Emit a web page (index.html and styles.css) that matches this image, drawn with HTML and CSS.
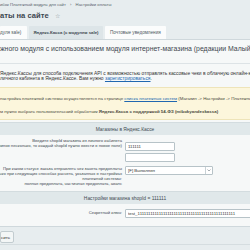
FILE: index.html
```html
<!DOCTYPE html>
<html lang="ru">

<head>
    <meta charset="UTF-8">
    <title>Настройки оплаты на сайте</title>
    <link rel="stylesheet" href="styles.css">
</head>

<body>

    <!-- шапка страницы -->
    <div class="crumbs">ибок Платежный модуль для сайт <span class="crumbs-sep">›</span> Настройки оплаты</div>
    <h1 class="page-title">аты на сайте <span class="star">☆</span></h1>

    <div class="tabs">
        <span class="tab tab-first">дуля sale)</span>
        <span class="tab tab-active">Яндекс.Касса (с модулем sale)</span>
        <span class="tab">Почтовые уведомления</span>
    </div>

    <div class="detail">
        <div class="detail-title">жного модуля с использованием модуля интернет-магазина (редакции Малый</div>

        <div class="intro">
            Яндекс.Кассы для способа подключения API с возможностью отправлять кассовые чеки в облачную онлайн-кассу<br>
            личного кабинета в Яндекс.Кассе. Вам нужно <a href="#">зарегистрироваться</a>.
        </div>

        <div class="note">
            <p>настройка платежной системы осуществляется на странице <a href="#">списка платежных систем</a> (Магазин -&gt; Настройки -&gt; Платежные</p>
            <p>м нужно выбрать пользовательский обработчик <b>Яндекс.Касса с поддержкой 54-ФЗ (mibokyandexkassa)</b></p>
        </div>

        <table class="edit-table">
            <colgroup>
                <col class="col-label">
                <col>
            </colgroup>
            <tr class="heading">
                <td colspan="2">Магазины в Яндекс.Кассе</td>
            </tr>
            <tr>
                <td class="label label-shop">Введите shopId магазина из личного кабинета<br>
                    (если магазинов несколько, то каждый shopId нужно ввести в новое поле)</td>
                <td class="field field-shop">
                    <input class="input-short" type="text" value="111111">
                    <input class="input-short" type="text" value="">
                </td>
            </tr>
            <tr>
                <td class="label label-status">При каком статусе заказа отправлять чек зачета предоплаты<br>
                    Отправлять только при следующих способах расчета, указанных в настройках<br>платежной системы:<br>полная предоплата, частичная предоплата, аванс</td>
                <td class="field field-status">
                    <div class="select-status">
                        <span>[F] Выполнен</span>
                        <span class="select-arrow">
                            <svg width="4" height="3" viewBox="0 0 4 3"><path d="M0.5 0.5 L2 2 L3.5 0.5" fill="none" stroke="#6b777e" stroke-width="0.6"/></svg>
                        </span>
                    </div>
                </td>
            </tr>
            <tr class="heading">
                <td colspan="2">Настройки магазина shopId = 111111</td>
            </tr>
            <tr>
                <td class="label label-key">Секретный ключ:</td>
                <td class="field field-key"><input class="input-long" type="text" value="test_1111111111111111111111111111111111111111111111"></td>
            </tr>
        </table>
    </div>

    <div class="buttons">
        <button class="btn">сить</button>
    </div>

</body>

</html>
```

FILE: styles.css
```css
body {
    margin: 0;
    background-color: #e7edef;
    font-family: 'Liberation Sans', Arial, sans-serif;
    color: #3f4b54;
    overflow: hidden;
}

.crumbs {
    height: 8px;
    padding-top: 2px;
    font-size: 4.2px;
    color: #58646c;
    white-space: nowrap;
}

.crumbs-sep {
    padding: 0 3px;
}

.page-title {
    margin: 0;
    height: 15px;
    padding-top: 1px;
    font-size: 7.6px;
    font-weight: bold;
    color: #3c4750;
    white-space: nowrap;
}

.star {
    padding-left: 4px;
    font-weight: normal;
    font-size: 6px;
    color: #8f9ba2;
}

.tabs {
    display: flex;
    gap: 2px;
    height: 13px;
}

.tab {
    display: flex;
    align-items: center;
    padding: 0 5px;
    background-color: #fbfcfc;
    border-radius: 1px 1px 0 0;
    font-size: 4.6px;
    color: #4c5860;
    white-space: nowrap;
}

.tab-first {
    padding-left: 0;
    width: 22px;
}

.tab-active {
    justify-content: center;
    width: 64px;
    background-color: #dde5e8;
    font-weight: bold;
    font-size: 4.3px;
    color: #3b464e;
}

.detail {
    background-color: #f6f8f8;
    border-top: 1px solid #cfd8dc;
    overflow: hidden;
}

.detail-title {
    height: 24px;
    padding-top: 5px;
    border-bottom: 1px solid #dde3e6;
    font-size: 6.9px;
    color: #3d474f;
    white-space: nowrap;
    overflow: hidden;
    box-sizing: border-box;
}

.intro {
    height: 23px;
    padding-top: 7px;
    box-sizing: border-box;
    font-size: 4.9px;
    line-height: 5px;
    color: #333;
    white-space: nowrap;
    overflow: hidden;
}

.intro a,
.note a {
    color: #2067b0;
}

.note {
    height: 33px;
    padding-top: 8px;
    box-sizing: border-box;
    background-color: #fcf6dc;
    border-top: 1px solid #eee4b9;
    border-bottom: 1px solid #eee4b9;
    font-size: 4.4px;
    color: #4a4a3c;
    white-space: nowrap;
    overflow: hidden;
}

.note p {
    margin: 0 0 8px;
}

/* таблица настроек, левый край уходит за кадр */
.edit-table {
    table-layout: fixed;
    width: calc(100% + 40px);
    margin-top: 2px;
    margin-left: -40px;
    border-collapse: collapse;
}

.col-label {
    width: 165px;
}

.edit-table td {
    padding: 0;
    vertical-align: top;
}

.heading td {
    height: 12px;
    padding-left: 40px;
    background-color: #e0e8ea;
    border-top: 1px solid #d3dcdf;
    text-align: center;
    vertical-align: middle;
    font-size: 4.9px;
    color: #3f4a52;
}

.label {
    padding-right: 3px !important;
    text-align: right;
    font-size: 4.2px;
    line-height: 5px;
    color: #3f4a52;
    white-space: nowrap;
    overflow: hidden;
}

.label-shop {
    padding-top: 3px !important;
}

.field-shop {
    padding: 7px 0 2px !important;
}

.label-status {
    padding-top: 2px !important;
    padding-bottom: 5px !important;
}

.field-status {
    padding-top: 2px !important;
}

.label-key {
    padding-top: 6px !important;
}

.field-key {
    padding: 5px 0 8px !important;
}

.edit-table input {
    display: block;
    box-sizing: border-box;
    height: 9px;
    padding: 0 2px;
    background: #fff;
    border: 1px solid #b7c3c8;
    border-radius: 1px;
    font-family: 'Liberation Sans', Arial, sans-serif;
    font-size: 4.4px;
    color: #333;
}

.input-short {
    width: 50px;
}

.input-short + .input-short {
    margin-top: 2px;
}

.input-long {
    width: 135px;
}

.select-status {
    display: flex;
    align-items: center;
    justify-content: space-between;
    box-sizing: border-box;
    width: 88px;
    height: 9px;
    padding-left: 2px;
    background: #fff;
    border: 1px solid #b7c3c8;
    border-radius: 1px;
    font-size: 4.4px;
    color: #333;
}

.select-arrow {
    display: flex;
    align-items: center;
    justify-content: center;
    width: 6px;
    height: 7px;
    border-left: 1px solid #c9d2d6;
}

.buttons {
    border-top: 1px solid #cfd8dc;
    padding: 4px 0 1px;
    border-bottom: 1px solid #d5dde0;
}

.btn {
    display: block;
    height: 12px;
    padding: 0 3px 0 0;
    background-color: #f3f6f6;
    border: 1px solid #c2ccd0;
    border-radius: 2px;
    font-family: 'Liberation Sans', Arial, sans-serif;
    font-size: 4.4px;
    color: #333;
}
```
